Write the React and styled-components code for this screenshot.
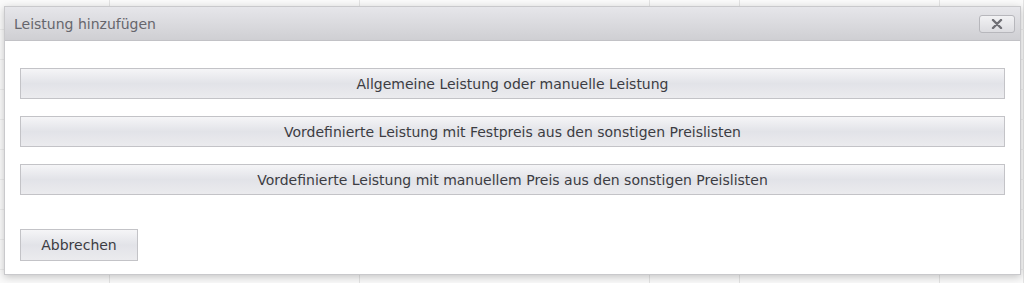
import styled, { createGlobalStyle } from 'styled-components';

const GlobalStyle = createGlobalStyle`
  html, body {
    margin: 0;
    padding: 0;
    background: #f7f7f7;
    font-family: 'DejaVu Sans', Verdana, sans-serif;
  }
`;

const Page = styled.div`
  position: relative;
  width: 1024px;
  height: 283px;
  overflow: hidden;
  background: #fafafa;
`;

const BackTable = styled.div`
  display: grid;
  grid-template-columns: 110px 250px 290px 90px 200px 84px;
  grid-auto-rows: 30px;
  opacity: 0.9;
`;

const BackCell = styled.div`
  border-right: 1px solid #e2e2e2;
  border-bottom: 1px solid #ececec;
`;

const Dialog = styled.div`
  position: absolute;
  left: 4px;
  top: 6px;
  width: 1015px;
  height: 267px;
  background: #fff;
  border: 1px solid #c9c9cc;
  box-shadow: 0 2px 8px rgba(0, 0, 0, 0.22);
  display: flex;
  flex-direction: column;
`;

const TitleBar = styled.div`
  height: 33px;
  display: flex;
  align-items: center;
  justify-content: space-between;
  padding: 0 5px 0 9px;
  background: linear-gradient(#e6e6ea, #cfcfd3);
  border-bottom: 1px solid #c2c2c6;
`;

const Title = styled.span`
  font-size: 14px;
  color: #66666c;
`;

const CloseButton = styled.button`
  width: 36px;
  height: 18px;
  padding: 0;
  display: flex;
  align-items: center;
  justify-content: center;
  border: 1px solid #b7b7bc;
  border-radius: 3px;
  background: linear-gradient(#f2f2f4, #dcdce0);
`;

const Body = styled.div`
  flex: 1;
  display: flex;
  flex-direction: column;
  padding: 27px 15px 13px 15px;
`;

const Options = styled.div`
  display: flex;
  flex-direction: column;
  gap: 17px;
`;

const OptionButton = styled.button`
  height: 31px;
  width: 100%;
  border: 1px solid #c3c3c7;
  background: linear-gradient(#f5f5f7 0%, #e2e3e8 50%, #ebebee 100%);
  font-family: 'DejaVu Sans', Verdana, sans-serif;
  font-size: 14px;
  color: #3c3c42;
  text-align: center;
  padding: 0;
`;

const Footer = styled.div`
  margin-top: auto;
  display: flex;
`;

const CancelButton = styled(OptionButton)`
  width: 118px;
  height: 32px;
`;

const rows = Array.from({ length: 60 });

export default function App() {
  return (
    <Page>
      <GlobalStyle />
      <BackTable>
        {rows.map((_, i) => (
          <BackCell key={i} />
        ))}
      </BackTable>
      <Dialog>
        <TitleBar>
          <Title>Leistung hinzufügen</Title>
          <CloseButton aria-label="Schließen">
            <svg width="12" height="10" viewBox="0 0 12 10">
              <path d="M2 1 L10 9 M10 1 L2 9" stroke="#6e6e74" strokeWidth="2.4" strokeLinecap="round" />
            </svg>
          </CloseButton>
        </TitleBar>
        <Body>
          <Options>
            <OptionButton>Allgemeine Leistung oder manuelle Leistung</OptionButton>
            <OptionButton>Vordefinierte Leistung mit Festpreis aus den sonstigen Preislisten</OptionButton>
            <OptionButton>Vordefinierte Leistung mit manuellem Preis aus den sonstigen Preislisten</OptionButton>
          </Options>
          <Footer>
            <CancelButton>Abbrechen</CancelButton>
          </Footer>
        </Body>
      </Dialog>
    </Page>
  );
}
